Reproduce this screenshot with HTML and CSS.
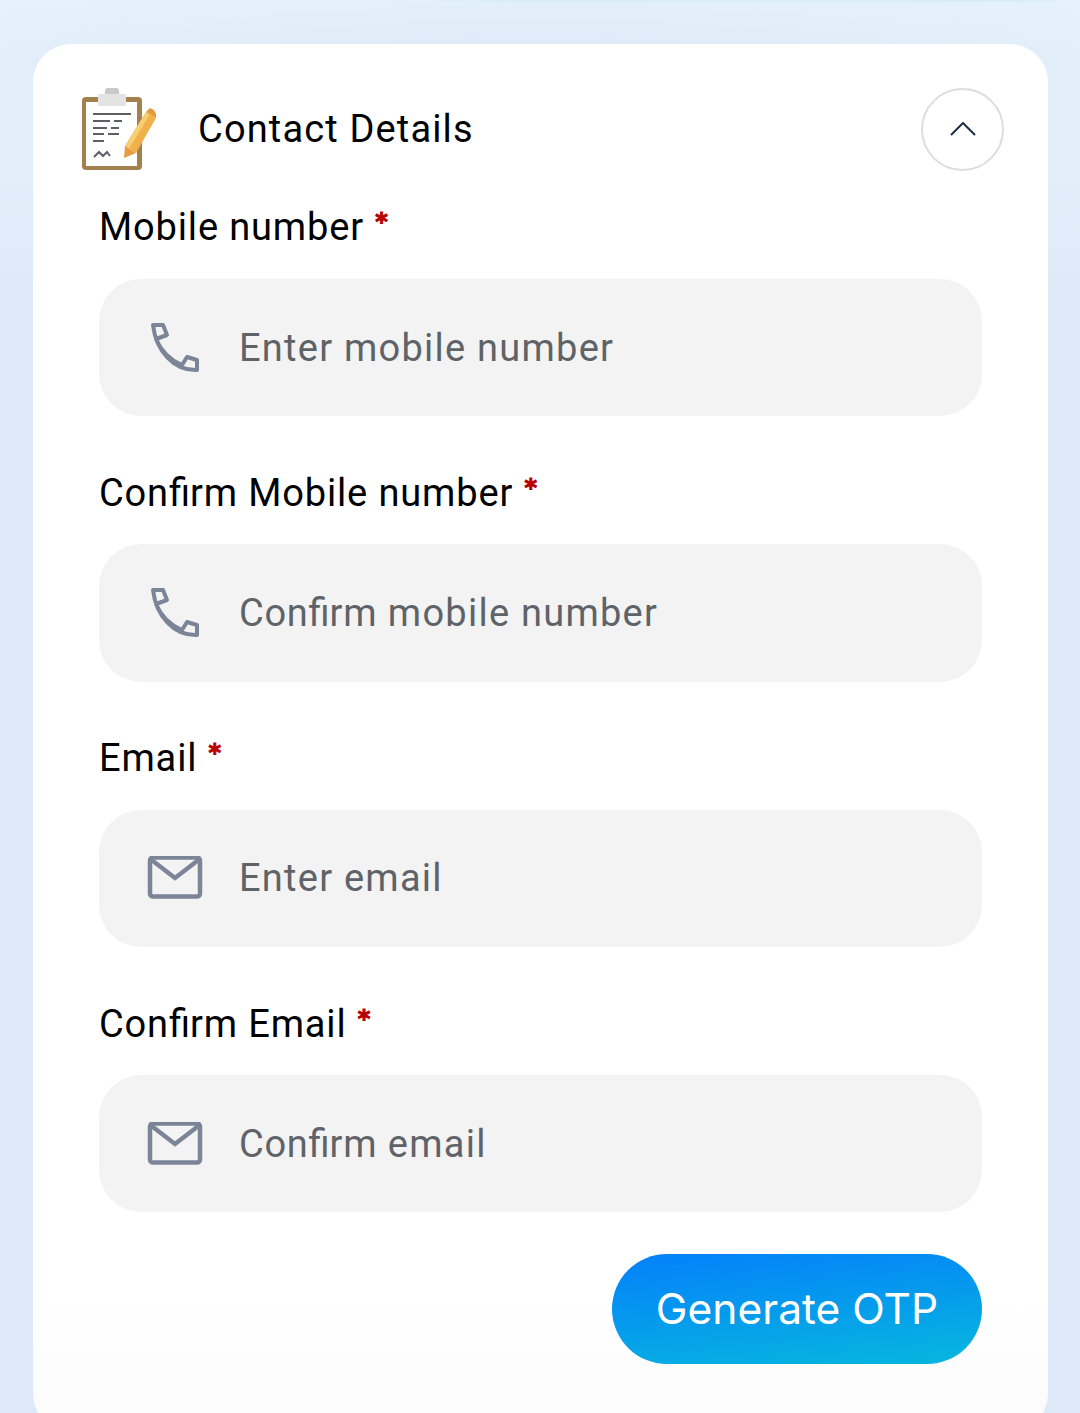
FILE: index.html
```html
<!DOCTYPE html>
<html>

<head>
    <title>Contact Details</title>
    <link rel="stylesheet" href="styles.css">
</head>

<body>
    <div class="card">
        <div class="card-header">
            <svg class="clipboard" viewBox="0 0 80 84" width="80" height="84">
                <rect x="2" y="10" width="60" height="73" rx="4" fill="#a5804f" />
                <rect x="6" y="15" width="51" height="64" fill="#fff" />
                <rect x="25" y="1" width="14" height="10" rx="3" fill="#c9c9c9" />
                <rect x="18" y="7" width="28" height="12" rx="1" fill="#e3e3e3" />
                <rect x="13" y="26" width="38" height="2" fill="#5d6066" />
                <rect x="13" y="33" width="17" height="2" fill="#5d6066" />
                <rect x="34" y="33" width="8" height="2" fill="#5d6066" />
                <rect x="13" y="40" width="14" height="2" fill="#5d6066" />
                <rect x="31" y="40" width="8" height="2" fill="#5d6066" />
                <rect x="13" y="46" width="11" height="2" fill="#5d6066" />
                <rect x="28" y="46" width="11" height="2" fill="#5d6066" />
                <rect x="13" y="53" width="11" height="2" fill="#5d6066" />
                <path d="M14 70 L19 65 L23 69 L27 65 L30 69" fill="none" stroke="#5d6066" stroke-width="2" />
                <path d="M45 59 L66 25 L76 31 L56 66 Z" fill="#f0b04a" />
                <path d="M45 59 L66 25 L70 27 L49 62 Z" fill="#f7cf73" />
                <path d="M44 71 L45 59 L56 66 Z" fill="#e79c3f" />
                <path d="M66 25 L70 21 L74 23 L76 27 L76 31 Z" fill="#e29a3c" />
            </svg>
            <div class="card-title">Contact Details</div>
            <div class="toggle">
                <svg viewBox="0 0 26 14" width="26" height="14">
                    <path d="M1 13 L13 1 L25 13" fill="none" stroke="#1c2f45" stroke-width="2" />
                </svg>
            </div>
        </div>

        <div class="field">
            <label class="field-label">Mobile number <span class="req">*</span></label>
            <div class="input-box">
                <div class="input-icon">
                    <svg viewBox="0 0 50 50" width="50" height="50">
                        <path d="M3 2 H13 L17 12 L6 16 C11 28 20 37 32 42 L37 34 L47 37 V47 C24 48 6 28 3 2 Z" fill="none" stroke="#7c8597" stroke-width="4" stroke-linejoin="round" />
                    </svg>
                </div>
                <span class="placeholder">Enter mobile number</span>
            </div>
        </div>

        <div class="field">
            <label class="field-label">Con<span class="tight">fi</span>rm Mobile number <span class="req">*</span></label>
            <div class="input-box">
                <div class="input-icon">
                    <svg viewBox="0 0 50 50" width="50" height="50">
                        <path d="M3 2 H13 L17 12 L6 16 C11 28 20 37 32 42 L37 34 L47 37 V47 C24 48 6 28 3 2 Z" fill="none" stroke="#7c8597" stroke-width="4" stroke-linejoin="round" />
                    </svg>
                </div>
                <span class="placeholder"><span class="word">Con<span class="tight">fi</span>rm</span> mobile number</span>
            </div>
        </div>

        <div class="field">
            <label class="field-label">Email <span class="req">*</span></label>
            <div class="input-box">
                <div class="input-icon">
                    <svg viewBox="0 0 56 44" width="56" height="44">
                        <rect x="3" y="1.5" width="50" height="39" rx="3" fill="none" stroke="#7c8597" stroke-width="4.5" />
                        <path d="M4 3.5 L28 22 L52 3.5" fill="none" stroke="#7c8597" stroke-width="4.5" />
                    </svg>
                </div>
                <span class="placeholder">Enter email</span>
            </div>
        </div>

        <div class="field">
            <label class="field-label">Con<span class="tight">fi</span>rm Email <span class="req">*</span></label>
            <div class="input-box">
                <div class="input-icon">
                    <svg viewBox="0 0 56 44" width="56" height="44">
                        <rect x="3" y="1.5" width="50" height="39" rx="3" fill="none" stroke="#7c8597" stroke-width="4.5" />
                        <path d="M4 3.5 L28 22 L52 3.5" fill="none" stroke="#7c8597" stroke-width="4.5" />
                    </svg>
                </div>
                <span class="placeholder"><span class="word">Con<span class="tight">fi</span>rm</span> email</span>
            </div>
        </div>

        <div class="actions">
            <button class="otp-btn">Generate OTP</button>
        </div>
    </div>
</body>

</html>
```

FILE: styles.css
```css
html,
body {
    height: 100%;
}

body {
    margin: 0;
    padding: 44px 32px 0 33px;
    box-sizing: border-box;
    height: 1413px;
    overflow: hidden;
    font-family: Roboto, "Noto Sans", sans-serif;
    background:
        linear-gradient(90deg, transparent 40%, #d8edf9 46%, #d8edf9 94%, transparent) top / 100% 2px no-repeat,
        radial-gradient(ellipse 75% 110px at 50% 70px, #dde9f6, transparent),
        linear-gradient(180deg, #e6f2fd 0, #deeaf7 300px, #dde9f6 100%);
}

.card {
    height: 1388px;
    background: linear-gradient(180deg, #fff 0%, #fff 90%, #fbfbfc 100%);
    border-radius: 38px;
    padding: 43px 44px 0 47px;
    box-sizing: border-box;
}

.card-header {
    display: flex;
    align-items: center;
    height: 84px;
}

.clipboard {
    flex: none;
}

.card-title {
    margin-left: 38px;
    font-size: 38px;
    letter-spacing: 1.15px;
    color: #000;
    flex: 1;
}

.toggle {
    width: 79px;
    height: 79px;
    border: 2px solid #dcdddf;
    border-radius: 50%;
    display: flex;
    align-items: center;
    justify-content: center;
}

.field {
    margin: 0 22px 0 19px;
    height: 265.4px;
    padding-top: 27.4px;
    box-sizing: border-box;
}

.field-label {
    display: block;
    font-size: 38px;
    letter-spacing: 0.85px;
    line-height: 48px;
    color: #000;
}

.tight {
    letter-spacing: 0;
}

.req {
    color: #b90000;
    font-family: "DejaVu Sans", sans-serif;
    font-weight: 700;
    font-size: 24px;
    -webkit-text-stroke: 1px #b90000;
    vertical-align: 10px;
    margin-left: 1px;
}

.input-box {
    height: 137.3px;
    margin-top: 27.6px;
    background: #f3f3f4;
    border-radius: 42px;
    display: flex;
    align-items: center;
    padding-left: 48px;
}

.input-icon {
    flex: none;
    width: 56px;
    display: flex;
    justify-content: center;
}

.placeholder {
    margin-left: 36px;
    font-size: 38px;
    letter-spacing: 1.25px;
    color: #5f6368;
}

.word {
    letter-spacing: 0.7px;
}

.actions {
    display: flex;
    justify-content: flex-end;
    margin-right: 22px;
    padding-top: 21px;
}

.otp-btn {
    width: 370px;
    height: 110px;
    padding-bottom: 1px;
    border: none;
    border-radius: 55px;
    color: #fff;
    font-family: Inter, Roboto, sans-serif;
    font-size: 42.5px;
    background: linear-gradient(174deg, #0480fb 0%, #07b7de 100%);
}
```
